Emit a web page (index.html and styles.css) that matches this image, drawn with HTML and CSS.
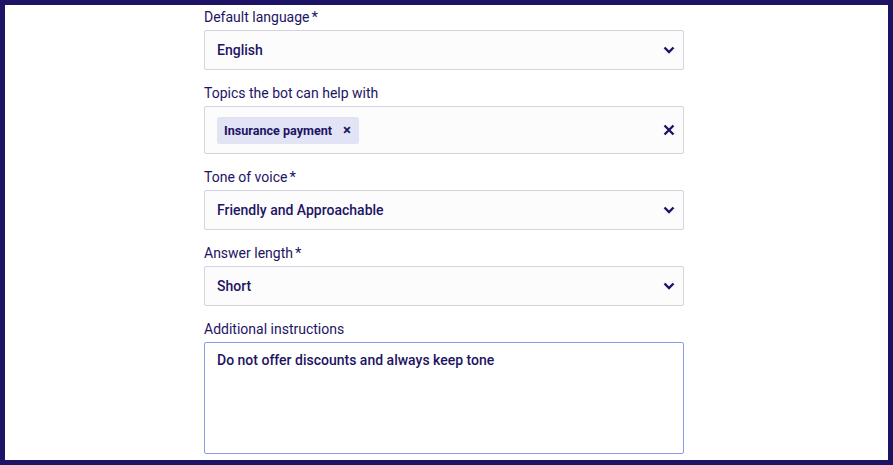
FILE: index.html
```html
<!DOCTYPE html>
<html lang="en">
<head>
    <meta charset="UTF-8">
    <meta name="viewport" content="width=device-width, initial-scale=1.0">
    <title>Bot settings</title>
    <link rel="stylesheet" href="styles.css">
</head>
<body>
    <div class="frame">
        <form class="form">
            <div class="field">
                <label class="label">Default language<span class="req">*</span></label>
                <div class="select">
                    <span class="value">English</span>
                    <svg class="chevron" width="12" height="8" viewBox="0 0 12 8"><path d="M1.5 1.5 L6 6 L10.5 1.5" fill="none" stroke="#1d1464" stroke-width="2.4"/></svg>
                </div>
            </div>
            <div class="field">
                <label class="label">Topics the bot can help with</label>
                <div class="select multi">
                    <span class="chip">Insurance payment <span class="chip-x">&times;</span></span>
                    <svg class="clear" width="12" height="12" viewBox="0 0 12 12"><path d="M1.5 1.5 L10.5 10.5 M10.5 1.5 L1.5 10.5" fill="none" stroke="#1d1464" stroke-width="2.4"/></svg>
                </div>
            </div>
            <div class="field">
                <label class="label">Tone of voice<span class="req">*</span></label>
                <div class="select">
                    <span class="value">Friendly and Approachable</span>
                    <svg class="chevron" width="12" height="8" viewBox="0 0 12 8"><path d="M1.5 1.5 L6 6 L10.5 1.5" fill="none" stroke="#1d1464" stroke-width="2.4"/></svg>
                </div>
            </div>
            <div class="field">
                <label class="label">Answer length<span class="req">*</span></label>
                <div class="select">
                    <span class="value">Short</span>
                    <svg class="chevron" width="12" height="8" viewBox="0 0 12 8"><path d="M1.5 1.5 L6 6 L10.5 1.5" fill="none" stroke="#1d1464" stroke-width="2.4"/></svg>
                </div>
            </div>
            <div class="field">
                <label class="label">Additional instructions</label>
                <div class="textarea">Do not offer discounts and always keep tone</div>
            </div>
        </form>
    </div>
</body>
</html>
```

FILE: styles.css
```css
body {
    margin: 0;
    background: #1e1466;
    font-family: Roboto, 'Liberation Sans', sans-serif;
    color: #1d1464;
}
.frame {
    margin: 5px 5px 0 5px;
    width: 883px;
    height: 455px;
    background: #ffffff;
    overflow: hidden;
}
.form {
    width: 480px;
    padding: 3px 0 0 199px;
}
.field {
    margin-bottom: 14px;
}
.label {
    display: block;
    font-size: 14px;
    line-height: 18px;
    margin-bottom: 4px;
}
.req {
    margin-left: 2px;
    font-size: 15px;
}
.select {
    display: flex;
    align-items: center;
    justify-content: space-between;
    height: 38px;
    padding: 0 8px 0 12px;
    border: 1px solid #d3d3df;
    border-radius: 2px;
    background: #fcfcfd;
    font-size: 14px;
    font-weight: 500;
}
.multi {
    height: 46px;
}
.chip {
    display: inline-flex;
    align-items: center;
    height: 27px;
    padding: 0 8px 0 7px;
    background: #e3e3f6;
    border-radius: 2px;
    font-size: 12.6px;
    font-weight: 700;
}
.chip-x {
    margin-left: 11px;
    font-size: 15px;
}
.textarea {
    height: 112px;
    padding: 8px 12px;
    box-sizing: border-box;
    border: 1px solid #8c9de6;
    border-radius: 2px;
    font-size: 14px;
    font-weight: 500;
    line-height: 18px;
}
```
